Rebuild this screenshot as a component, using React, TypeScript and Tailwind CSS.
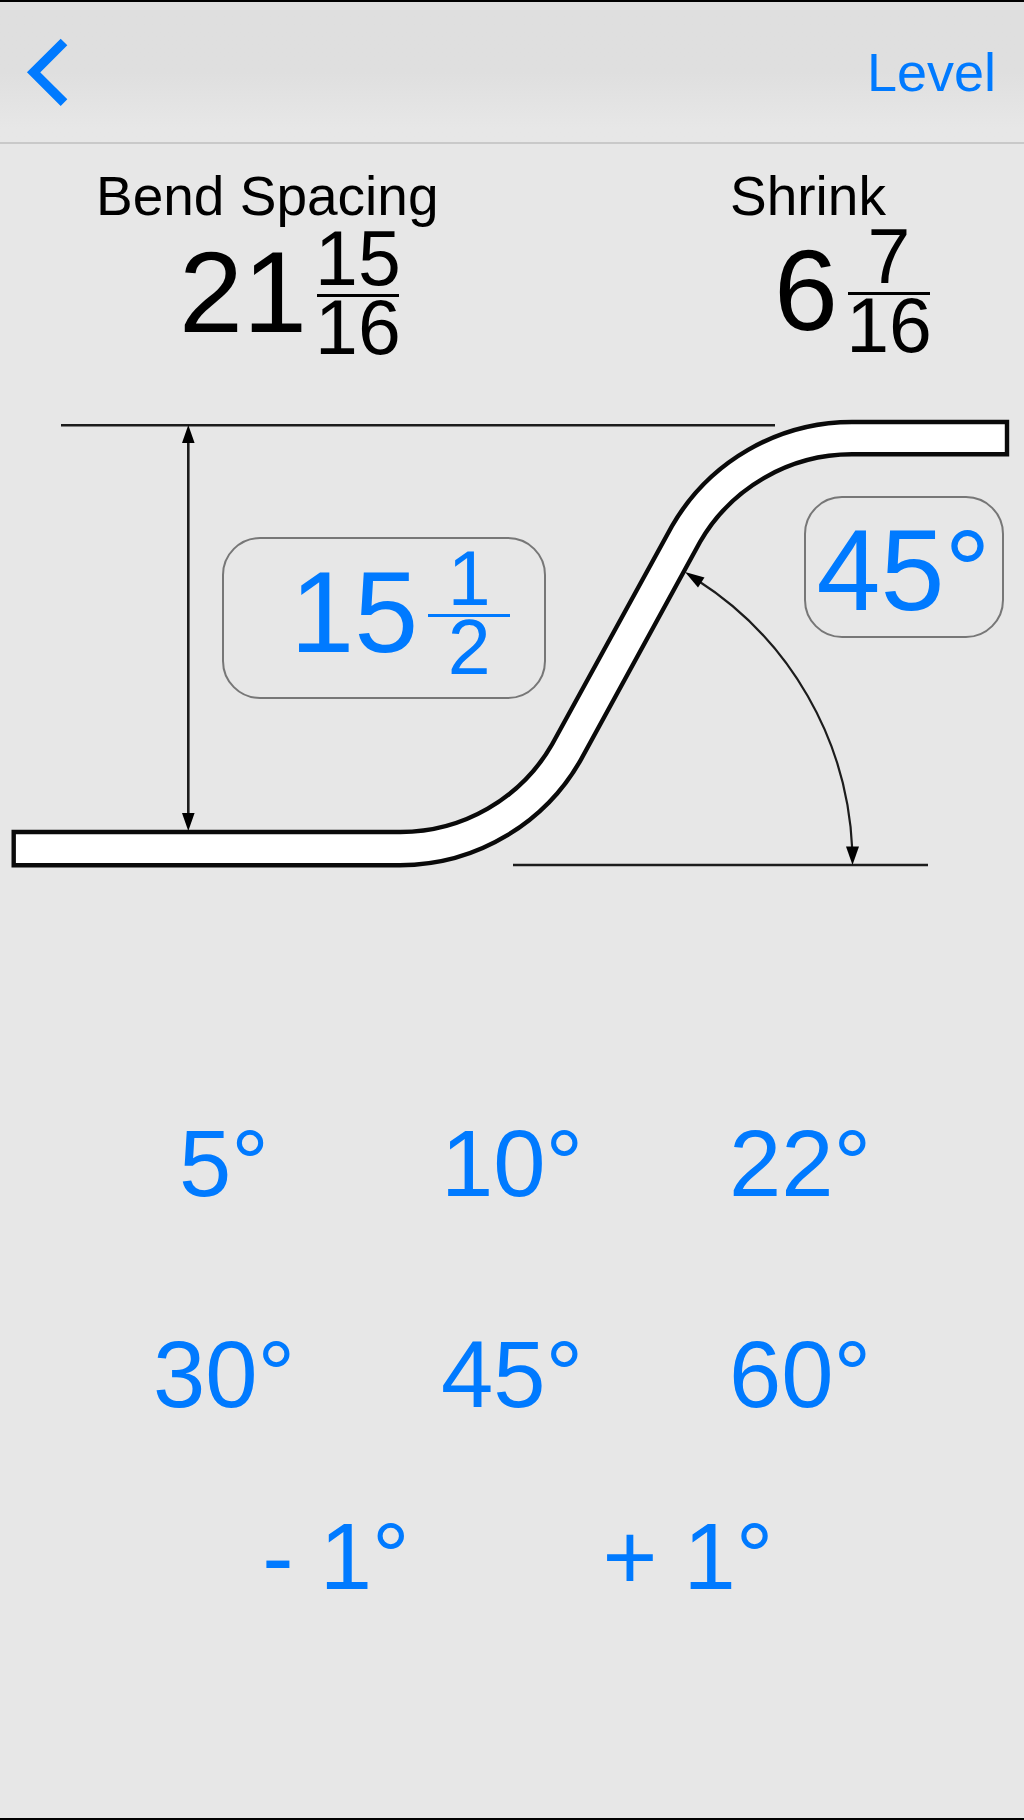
import { useState } from "react";

type Mixed = { whole: number; num: number; den: number };

const PRESETS = [5, 10, 22, 30, 45, 60];
const OFFSET = 15.5;

/** Rounds a length in inches to the nearest sixteenth, in lowest terms. */
function toMixed(value: number): Mixed {
  const sixteenths = Math.round(value * 16);
  const whole = Math.floor(sixteenths / 16);
  let num = sixteenths % 16;
  let den = 16;
  while (num > 0 && num % 2 === 0) {
    num /= 2;
    den /= 2;
  }
  return { whole, num, den };
}

function MixedNumber({ value }: { value: Mixed }) {
  return (
    <span className="flex items-center gap-2">
      <span className="text-[115px] leading-none">{value.whole}</span>
      {value.num > 0 && (
        <span className="flex w-[86px] flex-col items-center text-[77px] leading-[60px]">
          <span>{value.num}</span>
          <span className="mt-1.5 h-[3px] w-[82px] bg-current" />
          <span>{value.den}</span>
        </span>
      )}
    </span>
  );
}

function BendDrawing() {
  return (
    <svg viewBox="0 0 1024 480" className="block w-full" aria-hidden="true">
      <path
        d="M13.7 432H400A175 175 0 0 0 552 344.5L672 126A208 208 0 0 1 852 22H1007V54.3H852A175.7 175.7 0 0 0 700 142L584 354A208.3 208.3 0 0 1 400 465.3H13.7Z"
        fill="#fff"
        stroke="#0a0a0a"
        strokeWidth="4.4"
      />
      <g fill="none" stroke="#1c1c1c" strokeWidth="2.6">
        <path d="M61 25.3H775" />
        <path d="M513 465H928" />
        <path d="M188.3 38V420" />
        <path d="M697 180A337 337 0 0 1 852.3 450" strokeWidth="2.2" />
      </g>
      <g fill="#000">
        <path d="M188.3 25L194.6 43H182Z" />
        <path d="M188.3 431L194.6 413H182Z" />
        <path d="M852.5 465L846 446.5H859Z" />
        <path d="M685 172L704.5 177.5L698 187.5Z" />
      </g>
    </svg>
  );
}

export default function App() {
  const [angle, setAngle] = useState(45);
  const radians = (angle * Math.PI) / 180;
  const spacing = toMixed(OFFSET / Math.sin(radians));
  const shrink = toMixed(OFFSET * Math.tan(radians / 2));
  const step = (by: number) => setAngle((a) => Math.min(89, Math.max(1, a + by)));

  return (
    <div className="flex min-h-screen flex-col border-y-2 border-black bg-[#e7e7e7] font-['Liberation_Sans',Arial,sans-serif] text-black">
      <header className="flex h-[142px] items-center justify-between border-b-2 border-[#c9c9c9] bg-linear-to-b from-[#dfdfdf] from-50% to-[#e7e7e7] to-90% px-6 text-[#007aff]">
        <button type="button" aria-label="Back">
          <svg viewBox="0 0 48 72" className="block h-[72px] w-12" fill="none" stroke="currentColor" strokeWidth="9.4">
            <path d="M40 6L9.6 36.3L40 66.6" />
          </svg>
        </button>
        <button type="button" className="pr-1 text-[54px] leading-[60px]">
          Level
        </button>
      </header>

      <main>
        <section className="flex justify-between pt-[22px] pr-[92px] pl-24">
          <div>
            <h2 className="text-[55px] leading-[60px]">Bend Spacing</h2>
            <div className="pt-0.5 pl-[83px]">
              <MixedNumber value={spacing} />
            </div>
          </div>
          <div>
            <h2 className="text-[55px] leading-[60px]">Shrink</h2>
            <div className="pl-11">
              <MixedNumber value={shrink} />
            </div>
          </div>
        </section>

        <section className="relative mt-[43px]">
          <BendDrawing />
          <button
            type="button"
            aria-label="Offset height"
            className="absolute top-[28.5%] left-[21.7%] flex h-[162px] w-[324px] items-center justify-end rounded-[38px] border-2 border-[#777] pr-8 pb-2.5 text-[#007aff]"
          >
            <MixedNumber value={toMixed(OFFSET)} />
          </button>
          <button
            type="button"
            aria-label="Bend angle"
            className="absolute top-[20%] right-[2%] flex h-[142px] w-[200px] items-center justify-center rounded-[38px] border-2 border-[#777] pt-1.5 text-[115px] leading-none text-[#007aff]"
          >
            {angle}°
          </button>
        </section>

        <section className="flex flex-col pt-[236px] text-[94px] leading-[96px] text-[#007aff]">
          <div className="grid grid-cols-3 gap-y-[115px] px-20">
            {PRESETS.map((deg) => (
              <button key={deg} type="button" onClick={() => setAngle(deg)}>
                {deg}°
              </button>
            ))}
          </div>
          <div className="mt-[86px] grid grid-cols-2 px-40">
            <button type="button" onClick={() => step(-1)}>
              - 1°
            </button>
            <button type="button" onClick={() => step(1)}>
              + 1°
            </button>
          </div>
        </section>
      </main>
    </div>
  );
}
